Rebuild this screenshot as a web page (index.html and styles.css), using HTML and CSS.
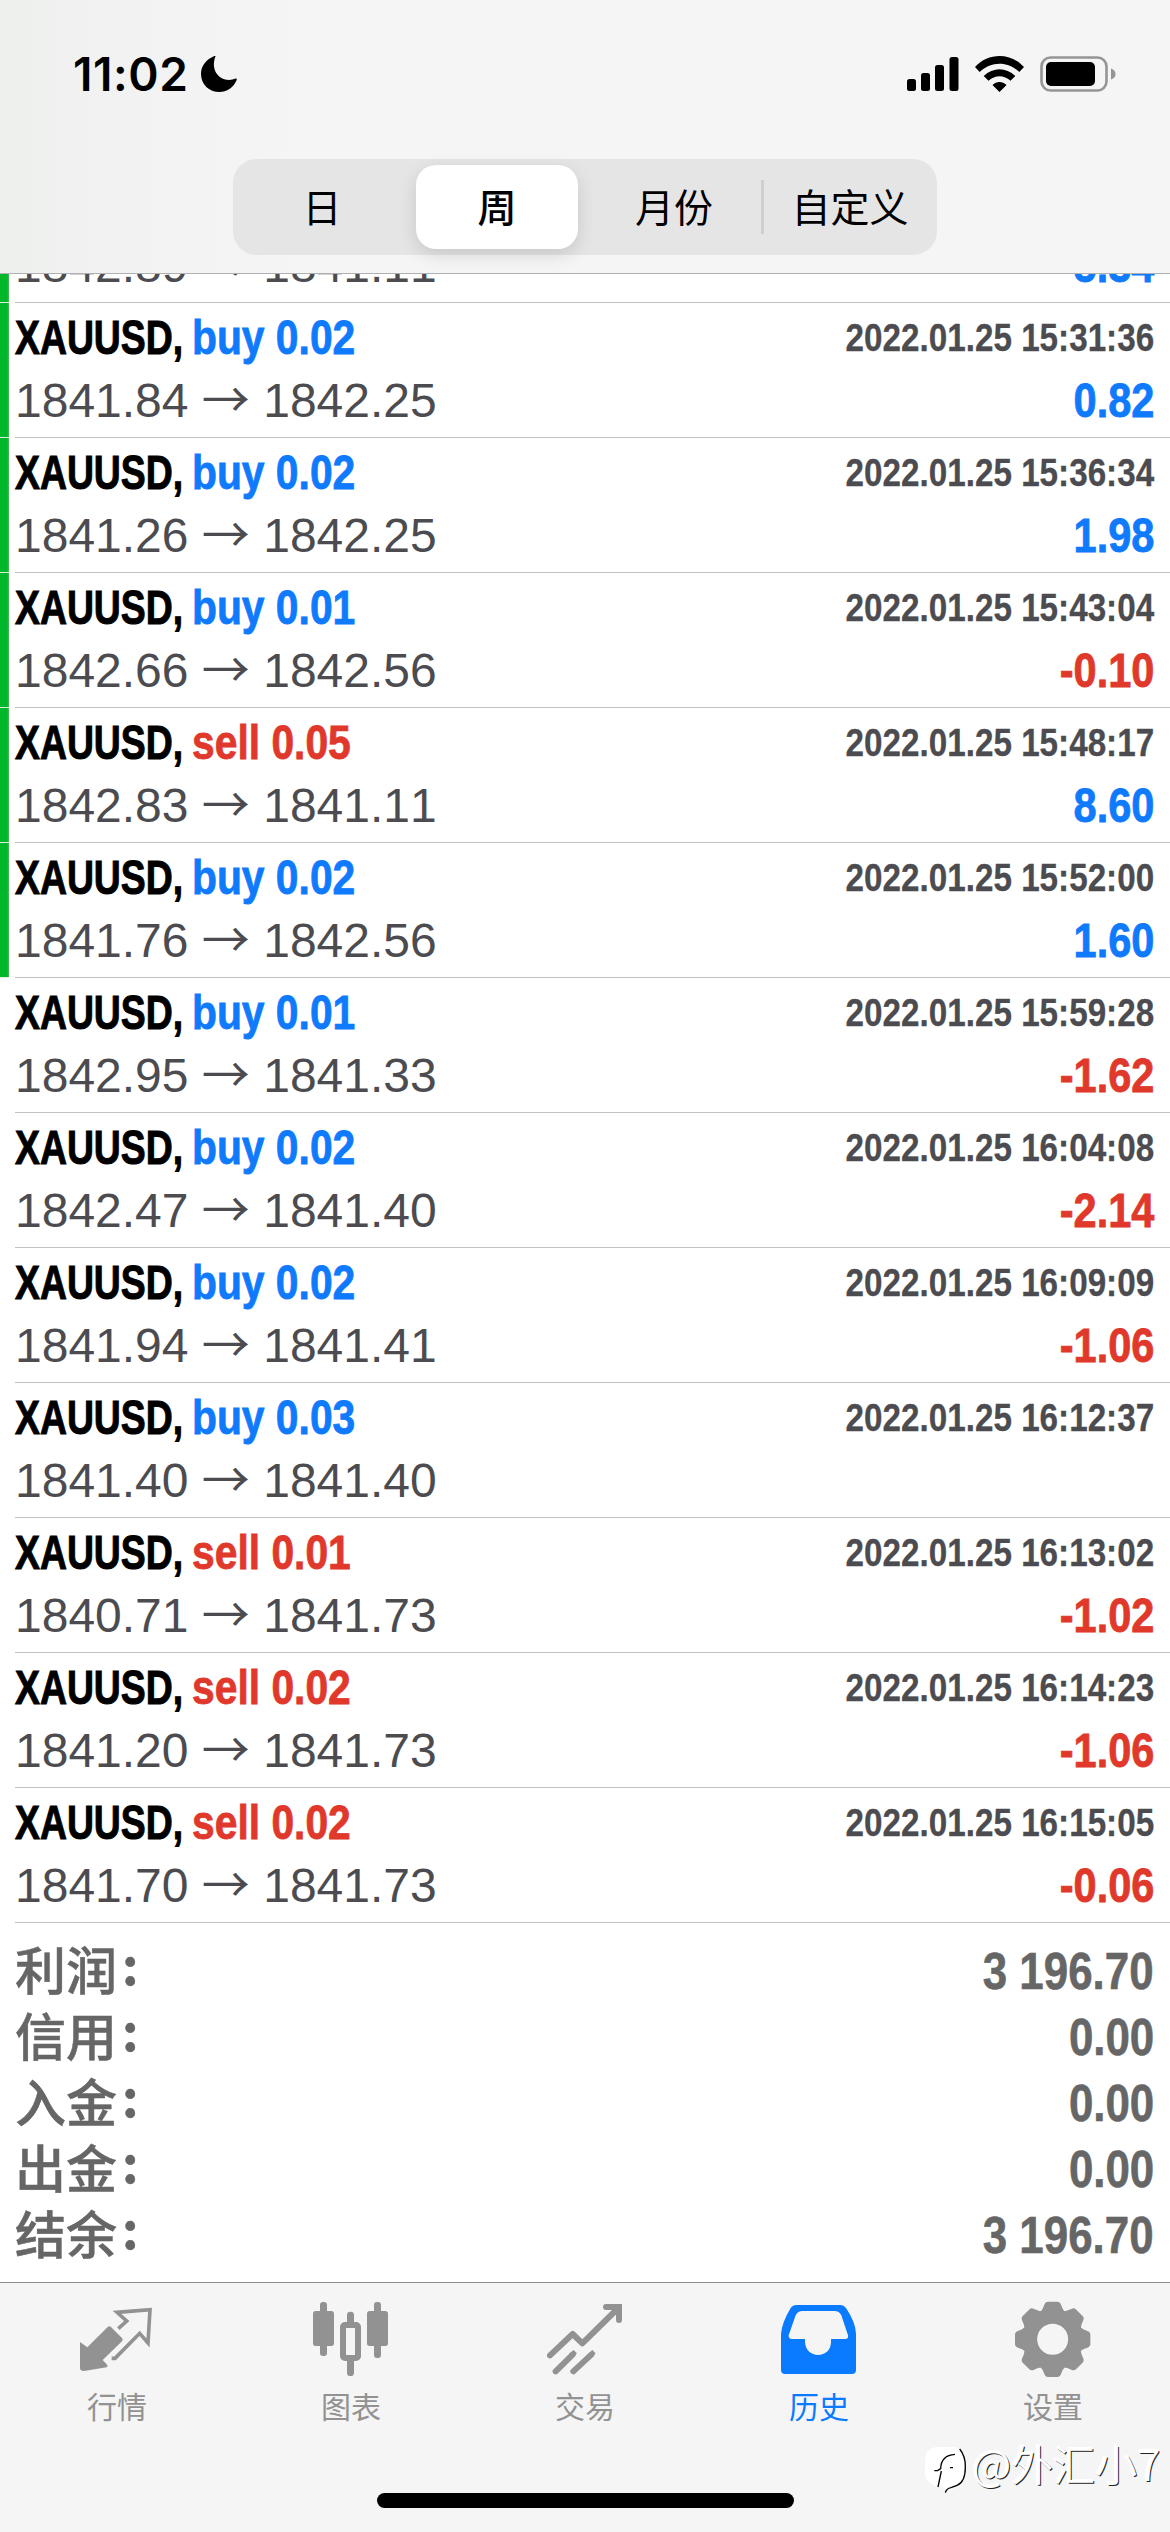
FILE: index.html
```html
<!DOCTYPE html>
<html lang="zh-CN">
<head>
<meta charset="utf-8">
<title>历史</title>
<link rel="stylesheet" href="styles.css">
</head>
<body>
<div class="screen">
  <header class="top">
    <div class="status">
      <div class="clock">
        <span class="time">11:02</span>
        <svg class="moon" viewBox="0 0 36 36"><path d="M14.500 .300C11 9 13.500 17 18.500 20.700C23.500 24.400 29.500 24.800 34.700 22.600Q36.300 22.500 35.600 24.200C32.500 31.500 25.500 36 18.500 36C8 36 0 28.500 0 18C0 10 5 3.500 12.800 .200Q14.500 -.800 14.500 .300Z"/></svg>
      </div>
      <div class="indicators">
        <svg class="signal" viewBox="0 0 52 34"><rect y="22" width="9" height="12" rx="2.500"/><rect x="14" y="16" width="9" height="18" rx="2.500"/><rect x="28" y="8" width="9" height="26" rx="2.500"/><rect x="42.500" width="9" height="34" rx="2.500"/></svg>
        <svg class="wifi" viewBox="0 0 49 36"><path d="M0 11C13-3.600 36-3.600 49 11L44.300 16C33 5 16 5 4.700 16ZM8.700 20C18 11 31 11 40.300 20L35.500 24.700C29 18.600 20 18.600 13.500 24.700ZM17.500 29C21.500 25 27.500 25 31.500 29L24.500 36Z"/></svg>
        <svg class="battery" viewBox="0 0 76 36"><rect x="1.500" y="1.500" width="65" height="33" rx="9" fill="none" stroke="#959595" stroke-width="2.600"/><rect x="6" y="6" width="49" height="24" rx="5"/><path d="M71 12.500Q75.500 14 75.500 18Q75.500 22 71 23.500Z" fill="#959595"/></svg>
      </div>
    </div>
    <nav class="segments">
      <span class="seg">日</span>
      <span class="seg on">周</span>
      <span class="seg">月份</span>
      <span class="seg last">自定义</span>
    </nav>
  </header>

  <main class="list">
    <div class="deal marked cut"><div class="body">
      <div class="line second"><span class="price">1842.89 <i class="arrow">→</i> 1841.11</span><b class="profit up">5.34</b></div>
    </div></div>
    <div class="deal marked"><div class="body">
      <div class="line first"><b class="symbol">XAUUSD,</b><b class="side up">buy 0.02</b><b class="date">2022.01.25 15:31:36</b></div>
      <div class="line second"><span class="price">1841.84 <i class="arrow">→</i> 1842.25</span><b class="profit up">0.82</b></div>
    </div></div>
    <div class="deal marked"><div class="body">
      <div class="line first"><b class="symbol">XAUUSD,</b><b class="side up">buy 0.02</b><b class="date">2022.01.25 15:36:34</b></div>
      <div class="line second"><span class="price">1841.26 <i class="arrow">→</i> 1842.25</span><b class="profit up">1.98</b></div>
    </div></div>
    <div class="deal marked"><div class="body">
      <div class="line first"><b class="symbol">XAUUSD,</b><b class="side up">buy 0.01</b><b class="date">2022.01.25 15:43:04</b></div>
      <div class="line second"><span class="price">1842.66 <i class="arrow">→</i> 1842.56</span><b class="profit down">-0.10</b></div>
    </div></div>
    <div class="deal marked"><div class="body">
      <div class="line first"><b class="symbol">XAUUSD,</b><b class="side down">sell 0.05</b><b class="date">2022.01.25 15:48:17</b></div>
      <div class="line second"><span class="price">1842.83 <i class="arrow">→</i> 1841.11</span><b class="profit up">8.60</b></div>
    </div></div>
    <div class="deal marked"><div class="body">
      <div class="line first"><b class="symbol">XAUUSD,</b><b class="side up">buy 0.02</b><b class="date">2022.01.25 15:52:00</b></div>
      <div class="line second"><span class="price">1841.76 <i class="arrow">→</i> 1842.56</span><b class="profit up">1.60</b></div>
    </div></div>
    <div class="deal"><div class="body">
      <div class="line first"><b class="symbol">XAUUSD,</b><b class="side up">buy 0.01</b><b class="date">2022.01.25 15:59:28</b></div>
      <div class="line second"><span class="price">1842.95 <i class="arrow">→</i> 1841.33</span><b class="profit down">-1.62</b></div>
    </div></div>
    <div class="deal"><div class="body">
      <div class="line first"><b class="symbol">XAUUSD,</b><b class="side up">buy 0.02</b><b class="date">2022.01.25 16:04:08</b></div>
      <div class="line second"><span class="price">1842.47 <i class="arrow">→</i> 1841.40</span><b class="profit down">-2.14</b></div>
    </div></div>
    <div class="deal"><div class="body">
      <div class="line first"><b class="symbol">XAUUSD,</b><b class="side up">buy 0.02</b><b class="date">2022.01.25 16:09:09</b></div>
      <div class="line second"><span class="price">1841.94 <i class="arrow">→</i> 1841.41</span><b class="profit down">-1.06</b></div>
    </div></div>
    <div class="deal"><div class="body">
      <div class="line first"><b class="symbol">XAUUSD,</b><b class="side up">buy 0.03</b><b class="date">2022.01.25 16:12:37</b></div>
      <div class="line second"><span class="price">1841.40 <i class="arrow">→</i> 1841.40</span></div>
    </div></div>
    <div class="deal"><div class="body">
      <div class="line first"><b class="symbol">XAUUSD,</b><b class="side down">sell 0.01</b><b class="date">2022.01.25 16:13:02</b></div>
      <div class="line second"><span class="price">1840.71 <i class="arrow">→</i> 1841.73</span><b class="profit down">-1.02</b></div>
    </div></div>
    <div class="deal"><div class="body">
      <div class="line first"><b class="symbol">XAUUSD,</b><b class="side down">sell 0.02</b><b class="date">2022.01.25 16:14:23</b></div>
      <div class="line second"><span class="price">1841.20 <i class="arrow">→</i> 1841.73</span><b class="profit down">-1.06</b></div>
    </div></div>
    <div class="deal"><div class="body">
      <div class="line first"><b class="symbol">XAUUSD,</b><b class="side down">sell 0.02</b><b class="date">2022.01.25 16:15:05</b></div>
      <div class="line second"><span class="price">1841.70 <i class="arrow">→</i> 1841.73</span><b class="profit down">-0.06</b></div>
    </div></div>

    <section class="totals">
      <div class="total"><span class="label">利润<i>:</i></span><b class="sum">3 196.70</b></div>
      <div class="total"><span class="label">信用<i>:</i></span><b class="sum">0.00</b></div>
      <div class="total"><span class="label">入金<i>:</i></span><b class="sum">0.00</b></div>
      <div class="total"><span class="label">出金<i>:</i></span><b class="sum">0.00</b></div>
      <div class="total"><span class="label">结余<i>:</i></span><b class="sum">3 196.70</b></div>
    </section>
  </main>

  <footer class="bottom">
    <nav class="tabs">
      <div class="tab">
        <svg viewBox="231 120 240 240"><path d="M240 246L262 262L323 201Q328 196 333 201L366 234Q371 239 366 244L308 300L322 315Q324 319 320 322L252 333Q240 333 240 325Z"/><path fill="none" stroke="currentColor" stroke-width="11" d="M355 206L380 183L351 157L450 149L444 249L419 220L345 295H335"/></svg>
        <span>行情</span>
      </div>
      <div class="tab">
        <svg viewBox="933 120 240 240"><rect x="960" y="126" width="21" height="162" rx="9"/><rect x="939" y="153" width="63" height="105" rx="8"/><rect x="1122" y="126" width="21" height="168" rx="9"/><rect x="1101" y="153" width="63" height="105" rx="8"/><rect x="1041" y="155" width="21" height="45" rx="10"/><rect x="1041" y="290" width="21" height="58" rx="10"/><rect x="1029" y="195" width="45" height="99" rx="6" fill="none" stroke="currentColor" stroke-width="18"/></svg>
        <span>图表</span>
      </div>
      <div class="tab">
        <svg viewBox="285 120 240 240"><g fill="none" stroke="currentColor" stroke-width="18" stroke-linecap="round"><path stroke-linejoin="round" d="M300 286L368 222L397 250L505 144"/><path d="M468 141H507V180"/><path d="M317 334L368 284M370 334L424 284"/></g><path d="M371 270L381 280L368 292L357 281ZM427 270L437 280L422 294L412 284Z"/></svg>
        <span>交易</span>
      </div>
      <div class="tab active">
        <svg viewBox="987 120 240 240"><path fill-rule="evenodd" d="M1039 135H1172Q1182 135 1188 144Q1217 187 1218 222V330Q1218 342 1206 342H1006Q993 342 993 330V222Q996 187 1022 144Q1028 135 1039 135ZM1058 153Q1043 153 1037 166L1016 226Q1015 237 1026 237H1065V247C1067 272 1084 285 1104 285C1125 285 1142 272 1143 247V237H1186Q1196 237 1194 226L1174 166Q1168 153 1153 153Z"/></svg>
        <span>历史</span>
      </div>
      <div class="tab">
        <svg viewBox="399 120 240 240"><g transform="translate(518 238)"><circle r="67" fill="none" stroke="currentColor" stroke-width="41"/><g id="pair"><path id="tooth" d="M-46 -76Q-33 -84 -30 -92L-25 -104Q-22 -113 -14 -113H14Q22 -113 25 -104L30 -92Q33 -84 46 -76L40 -60H-40Z"/><use href="#tooth" transform="rotate(180)"/></g><use href="#pair" transform="rotate(45)"/><use href="#pair" transform="rotate(90)"/><use href="#pair" transform="rotate(135)"/></g></svg>
        <span>设置</span>
      </div>
    </nav>
    <div class="home"></div>
  </footer>

  <div class="watermark">
    <svg viewBox="0 0 129 141"><path fill="#fff" d="M38 0H85Q124 4 124 60Q122 108 92 118L68 140L62 128L48 115L40 122L20 112Q0 100 0 78V38Q2 2 38 0Z"/><path fill="none" stroke="#000" stroke-width="4" d="M104 6Q122 28 121 60Q121 105 96 115L78 122Q64 125 61 137M28 71H38L47 65Q48 25 90 22M49 72L39 120M75 62H84"/></svg>
    <span>@外汇小7</span>
  </div>
</div>
</body>
</html>
```
FILE: styles.css
```css
* { box-sizing: border-box; }
body { margin: 0; background: #fff; }
i { font-style: normal; }

.screen {
  position: relative;
  width: 1170px;
  height: 2532px;
  display: flex;
  flex-direction: column;
  overflow: hidden;
  background: #fff;
  font-family: "Liberation Sans", "Noto Sans CJK SC", sans-serif;
}

/* header */
.top {
  height: 274px;
  flex: none;
  display: flex;
  flex-direction: column;
  align-items: center;
  border-bottom: 1px solid #b0b0b2;
  background: linear-gradient(90deg, #edf0ec 0, #f0f1f0 60px, #f3f3f4 180px, #f5f5f5 320px);
}
.status {
  width: 100%;
  height: 159px;
  display: flex;
  justify-content: space-between;
  padding: 55px 54px 0 73px;
}
.clock, .indicators { display: flex; height: 38px; align-items: center; }
.time {
  width: 128px;
  font: 600 46px/38px Inter, sans-serif;
  letter-spacing: 0.6px;
}
.moon { width: 36px; height: 36px; }
.signal { width: 52px; height: 34px; margin-right: 15.500px; }
.wifi { width: 49px; height: 36px; margin-right: 16.500px; }
.battery { width: 76px; height: 36px; }

.segments {
  display: flex;
  width: 704px;
  height: 96px;
  border-radius: 24px;
  background: #e6e5e6;
}
.seg {
  width: 176px;
  display: flex;
  align-items: center;
  justify-content: center;
  padding: 0 0 5px 2px;
  font: 400 39px/84px "Noto Sans CJK SC", sans-serif;
  color: #000;
}
.seg.on {
  width: 162px;
  margin: 6px 7px;
  padding-left: 0;
  border-radius: 20px;
  background: #fff;
  font-weight: 500;
  box-shadow: 0 6px 18px rgba(0, 0, 0, .13);
}
.seg.last {
  background: linear-gradient(#cfcfd1, #cfcfd1) 0 50% / 3px 54px no-repeat;
}

/* deals */
.list { flex: 1; display: flex; flex-direction: column; }
.deal { height: 135px; flex: none; display: flex; padding-left: 15px; }
.deal.marked {
  background:
    linear-gradient(#d8efdb, #d8efdb) 0 100% / 9px 1px no-repeat,
    linear-gradient(90deg, #00b62a 0 7px, #4fb55c 9px) 0 0 / 9px 100% no-repeat;
}
.body {
  flex: 1;
  border-bottom: 1px solid #c2c2c4;
  padding: 4px 16px 0 0;
}
.line { display: flex; justify-content: space-between; align-items: center; }
.first { height: 62px; line-height: 62px; }
.second { height: 64px; line-height: 64px; }
.cut { height: 29px; overflow: hidden; }
.cut .body { display: flex; flex-direction: column; justify-content: flex-end; padding-bottom: 4px; }
.cut .second { flex: none; }

/* condensed bold face, made by narrowing the regular-width one */
.symbol, .side, .profit, .date, .sum {
  white-space: pre;
  font-kerning: none;
  transform-origin: 0 50%;
}
.symbol {
  width: 177px;
  font-size: 48px;
  color: #000;
  transform: scaleX(.778);
  -webkit-text-stroke: 1px;
}
.side { font-size: 48px; transform: scaleX(.85); -webkit-text-stroke: .8px; }
.date, .profit, .sum { margin-left: auto; transform-origin: 100% 50%; }
.date { font-size: 39px; color: #4c4c50; transform: scaleX(.852); -webkit-text-stroke: .3px; }
.profit { font-size: 48px; transform: scaleX(.865); -webkit-text-stroke: .8px; }
.price { font-size: 48px; color: #4c4c50; white-space: pre; font-kerning: none; }
.arrow { font-family: "Noto Sans CJK SC", sans-serif; line-height: 0; }
.up { color: #0f7afc; }
.down { color: #e0392c; }

/* totals */
.totals { padding: 15px 16px 0 15px; color: #666; }
.total {
  display: flex;
  justify-content: space-between;
  height: 66px;
}
.label { margin-top: -3px; font: 500 51px/66px "Noto Sans CJK SC", sans-serif; -webkit-text-stroke: .5px; }
.label i { margin-left: 5px; font-weight: 700; line-height: 0; vertical-align: 5px; }
.sum { font-size: 51px; line-height: 67px; transform: scaleX(.86); -webkit-text-stroke: .6px; }

/* tab bar */
.bottom {
  height: 250px;
  flex: none;
  display: flex;
  flex-direction: column;
  align-items: center;
  border-top: 1px solid #8e8e90;
  background: #f5f5f5;
}
.tabs { display: flex; width: 100%; height: 210px; padding-top: 17px; }
.tab {
  width: 234px;
  display: flex;
  flex-direction: column;
  align-items: center;
  color: #929292;
  font: 400 30px/44px "Noto Sans CJK SC", sans-serif;
}
.tab svg { width: 80px; height: 80px; fill: currentColor; margin-bottom: 3px; }
.tab.active { color: #0a7aff; }
.home { width: 417px; height: 15px; border-radius: 8px; background: #000; }

/* author stamp laid over the tab bar */
.watermark {
  position: absolute;
  left: 925px;
  top: 2438px;
  display: flex;
  align-items: flex-start;
  font: 350 42px/50px "Noto Sans CJK SC", sans-serif;
  color: #fff;
  text-shadow: 1px 1px 0 #222, -1px -1px 0 #fff;
  white-space: nowrap;
}
.watermark svg { width: 43px; height: 47px; margin: 9px 4px 0 0; }
```
